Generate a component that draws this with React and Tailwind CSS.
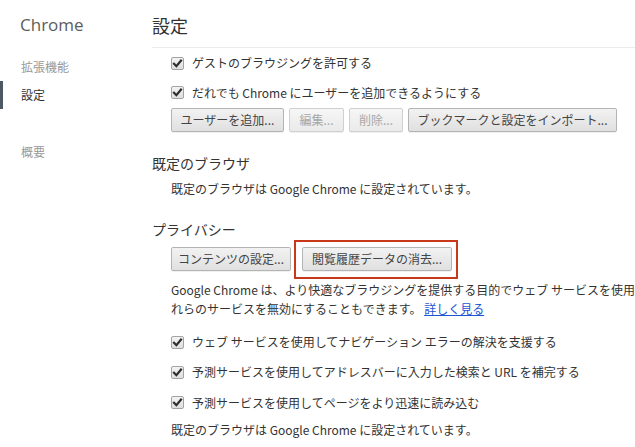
const FONT = { fontFamily: '"Noto Sans CJK JP", "Noto Sans", sans-serif' }

function Checkbox() {
  return (
    <span className="w-[13px] h-[13px] shrink-0 rounded-[2px] border border-[#a3a3a3] bg-gradient-to-b from-[#f4f4f4] to-[#dedede] flex items-center justify-center">
      <svg width="11" height="11" viewBox="0 0 11 11">
        <path d="M2 5.8 L4.4 8.2 L9 2.6" fill="none" stroke="#2e2e2e" strokeWidth="2.2" strokeLinecap="square" />
      </svg>
    </span>
  )
}

function CheckRow({ children, h = 'h-[30px]' }) {
  return (
    <div className={`${h} flex items-center gap-[8px] pl-[19px] text-[12px] text-[#333] whitespace-nowrap`}>
      <Checkbox />
      <span>{children}</span>
    </div>
  )
}

function Button({ children, disabled, w }) {
  return (
    <button
      className={`${w} h-[24px] flex items-center justify-center rounded-[2px] border text-[12px] leading-none whitespace-nowrap bg-gradient-to-b shadow-[0_1px_0_rgba(0,0,0,0.06)] ${
        disabled
          ? 'border-[#d0d0d0] from-[#f6f6f6] to-[#eaeaea] text-[#a8a8a8]'
          : 'border-[#b4b4b4] from-[#f2f2f2] to-[#e0e0e0] text-[#444]'
      }`}
    >
      {children}
    </button>
  )
}

const SIDE_ITEMS = [
  { label: '拡張機能' },
  { label: '設定', active: true },
]

export default function App() {
  return (
    <div className="w-[635px] h-[447px] overflow-hidden bg-white flex" style={FONT}>
      {/* サイドバー */}
      <aside className="w-[152px] shrink-0">
        <div className="h-[47px] pt-[11px] pl-[20px]">
          <span className="text-[17px] leading-[28px] text-[#5c5c5c]" style={{ fontFamily: '"Open Sans", sans-serif' }}>
            Chrome
          </span>
        </div>
        <nav className="mt-[6px]">
          {SIDE_ITEMS.map(item => (
            <div
              key={item.label}
              className={`h-[28px] flex items-center pl-[18px] text-[12px] border-l-[3px] ${
                item.active ? 'border-[#4d5865] text-[#333]' : 'border-transparent text-[#999]'
              }`}
            >
              {item.label}
            </div>
          ))}
          <div className="h-[28px] mt-[29px] flex items-center pl-[21px] text-[12px] text-[#999]">概要</div>
        </nav>
      </aside>

      {/* メイン */}
      <main className="flex-1 min-w-0">
        <div className="h-[48px] pt-[15px] border-b border-[#ececec]">
          <h1 className="text-[18px] leading-[20px] text-[#333]">設定</h1>
        </div>

        <CheckRow>ゲストのブラウジングを許可する</CheckRow>
        <CheckRow h="h-[29px]">だれでも Chrome にユーザーを追加できるようにする</CheckRow>
        <div className="pl-[19px] flex gap-[5px] mt-px">
          <Button w="w-[113px]">ユーザーを追加...</Button>
          <Button w="w-[55px]" disabled>編集...</Button>
          <Button w="w-[54px]" disabled>削除...</Button>
          <Button w="w-[209px]">ブックマークと設定をインポート...</Button>
        </div>

        <h2 className="mt-[21px] text-[14px] leading-[20px] text-[#333]">既定のブラウザ</h2>
        <p className="mt-[6px] pl-[19px] text-[12px] leading-[20px] text-[#333]">
          既定のブラウザは Google Chrome に設定されています。
        </p>

        <h2 className="mt-[20px] text-[14px] leading-[20px] text-[#333]">プライバシー</h2>
        <div className="mt-[8px] pl-[19px] flex gap-[11px]">
          <Button w="w-[120px]">コンテンツの設定...</Button>
          <span className="relative">
            <Button w="w-[150px]">閲覧履歴データの消去...</Button>
            <span className="absolute -left-[8px] -right-[6px] -top-[7px] -bottom-[8px] border-2 border-[#c8391b] pointer-events-none" />
          </span>
        </div>
        <div className="mt-[9px] pl-[19px] text-[12px] leading-[19px] text-[#333] whitespace-nowrap">
          <p>Google Chrome は、より快適なブラウジングを提供する目的でウェブ サービスを使用することがあります。必要に応じて、こ</p>
          <p>
            れらのサービスを無効にすることもできます。{' '}
            <a className="text-[#1a55d4] underline">詳しく見る</a>
          </p>
        </div>

        <div className="mt-[9px]">
          <CheckRow>ウェブ サービスを使用してナビゲーション エラーの解決を支援する</CheckRow>
          <CheckRow>予測サービスを使用してアドレスバーに入力した検索と URL を補完する</CheckRow>
          <CheckRow h="h-[31px]">予測サービスを使用してページをより迅速に読み込む</CheckRow>
        </div>
        <p className="mt-[2px] pl-[19px] text-[12px] leading-[20px] text-[#333] whitespace-nowrap">
          既定のブラウザは Google Chrome に設定されています。
        </p>
      </main>
    </div>
  )
}
